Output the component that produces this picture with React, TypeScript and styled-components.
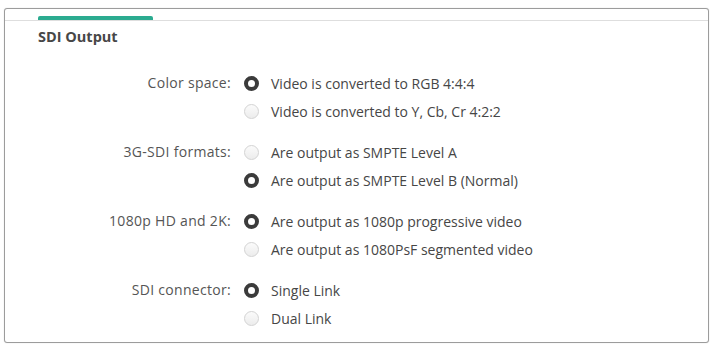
import React from "react";
import styled, { createGlobalStyle } from "styled-components";

const Global = createGlobalStyle`
  html, body { margin: 0; padding: 0; background: #ffffff; }
  body { font-family: "Open Sans", "Noto Sans", Arial, sans-serif; }
`;

const Page = styled.div`
  padding: 8px 3px 2px 4px;
  width: 712px;
  height: 345px;
  box-sizing: border-box;
`;

const Panel = styled.div`
  height: 100%;
  box-sizing: border-box;
  border: 1px solid #9c9c9c;
  border-radius: 3px;
  box-shadow: 0 0 1px rgba(0, 0, 0, 0.25);
  background: #fff;
  display: flex;
  flex-direction: column;
`;

const TabBar = styled.div`
  height: 11px;
  border-bottom: 1px solid #dedede;
  display: flex;
  align-items: flex-end;
  padding-left: 33px;
`;

const TabIndicator = styled.div`
  width: 115px;
  height: 4px;
  border-radius: 2px 2px 0 0;
  background: #2bab90;
`;

const Title = styled.h2`
  margin: 6px 0 0 33px;
  font-size: 14.5px;
  line-height: 20px;
  font-weight: 700;
  color: #474747;
`;

const Form = styled.div`
  display: flex;
  flex-direction: column;
  gap: 13px;
  margin-top: 22px;
`;

const Group = styled.div`
  display: grid;
  grid-template-columns: 226px 1fr;
  column-gap: 13px;
`;

const Label = styled.div`
  text-align: right;
  font-size: 14px;
  letter-spacing: 0.3px;
  line-height: 28px;
  color: #555;
`;

const Options = styled.div`
  display: flex;
  flex-direction: column;
`;

const Option = styled.div`
  display: flex;
  align-items: center;
  gap: 12px;
  height: 28px;
  font-size: 14px;
  color: #464646;
`;

const Radio = styled.span<{ $on?: boolean }>`
  width: 15px;
  height: 15px;
  box-sizing: border-box;
  border-radius: 50%;
  flex: none;
  ${(p) =>
    p.$on
      ? `border: 4px solid #3b3b3b; background: #fff;`
      : `border: 1px solid #d3d3d3; background: linear-gradient(#fbfbfb, #ececec);`}
`;

const groups = [
  { label: "Color space:", options: ["Video is converted to RGB 4:4:4", "Video is converted to Y, Cb, Cr 4:2:2"], sel: 0 },
  { label: "3G-SDI formats:", options: ["Are output as SMPTE Level A", "Are output as SMPTE Level B (Normal)"], sel: 1 },
  { label: "1080p HD and 2K:", options: ["Are output as 1080p progressive video", "Are output as 1080PsF segmented video"], sel: 0 },
  { label: "SDI connector:", options: ["Single Link", "Dual Link"], sel: 0 },
];

export default function App() {
  return (
    <>
      <Global />
      <Page>
        <Panel>
          <TabBar>
            <TabIndicator />
          </TabBar>
          <Title>SDI Output</Title>
          <Form>
            {groups.map((g) => (
              <Group key={g.label}>
                <Label>{g.label}</Label>
                <Options>
                  {g.options.map((o, i) => (
                    <Option key={o}>
                      <Radio $on={i === g.sel} />
                      {o}
                    </Option>
                  ))}
                </Options>
              </Group>
            ))}
          </Form>
        </Panel>
      </Page>
    </>
  );
}
